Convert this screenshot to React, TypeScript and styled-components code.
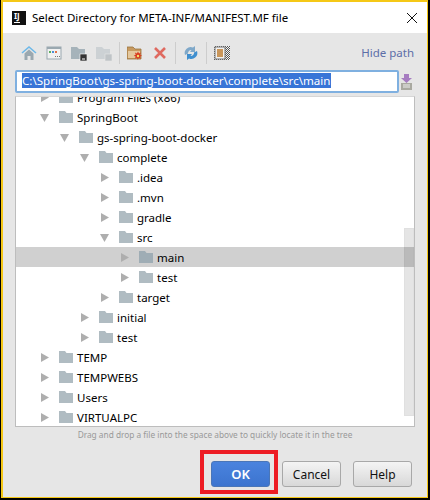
import styled, { createGlobalStyle } from "styled-components";

const GlobalStyle = createGlobalStyle`
  html, body {
    margin: 0;
    padding: 0;
    background: #000;
  }
  * {
    box-sizing: border-box;
  }
`;

const INDENT = 20;

const treeRows = [
  { label: "Program Files (x86)", level: 0, open: false },
  { label: "SpringBoot", level: 0, open: true },
  { label: "gs-spring-boot-docker", level: 1, open: true },
  { label: "complete", level: 2, open: true },
  { label: ".idea", level: 3, open: false },
  { label: ".mvn", level: 3, open: false },
  { label: "gradle", level: 3, open: false },
  { label: "src", level: 3, open: true },
  { label: "main", level: 4, open: false, selected: true },
  { label: "test", level: 4, open: false },
  { label: "target", level: 3, open: false },
  { label: "initial", level: 2, open: false },
  { label: "test", level: 2, open: false },
  { label: "TEMP", level: 0, open: false },
  { label: "TEMPWEBS", level: 0, open: false },
  { label: "Users", level: 0, open: false },
  { label: "VIRTUALPC", level: 0, open: false },
];

const Dialog = styled.div`
  position: relative;
  width: 430px;
  height: 500px;
  display: flex;
  flex-direction: column;
  border-style: solid;
  border-color: #000;
  border-width: 0 2px 2px 1px;
  background: #e6e6e6;
  font-family: "Noto Sans", "Open Sans", sans-serif;
  font-size: 11.5px;
  color: #000;
  overflow: hidden;
`;

const Inner = styled.div`
  flex: 1;
  display: flex;
  flex-direction: column;
  border-style: solid;
  border-color: #f5c816;
  border-width: 2px 1px 1px 2px;
  min-height: 0;
`;

const TitleBar = styled.div`
  height: 31px;
  flex: none;
  background: #fff;
  display: flex;
  align-items: center;
  padding: 0 9px;
`;

const AppIcon = styled.div`
  width: 14px;
  height: 14px;
  background: #111;
  color: #fff;
  font-size: 8px;
  font-weight: 700;
  line-height: 8px;
  padding: 1px 0 0 2px;
  flex: none;
  position: relative;
  &::after {
    content: "";
    position: absolute;
    left: 2px;
    bottom: 2px;
    width: 6px;
    height: 1px;
    background: #fff;
  }
`;

const Title = styled.div`
  margin-left: 6px;
  flex: 1;
  white-space: nowrap;
`;

const CloseIcon = styled.svg`
  width: 12px;
  height: 12px;
`;

const Toolbar = styled.div`
  height: 37px;
  flex: none;
  display: flex;
  align-items: center;
  padding: 2px 13px 0 18px;
  gap: 9px;
`;

const ToolIcon = styled.svg`
  width: 16px;
  height: 16px;
  flex: none;
`;

const Divider = styled.div`
  width: 1px;
  height: 22px;
  background: #cdcdcd;
  margin: 0 -2px;
`;

const HidePath = styled.div`
  margin-left: auto;
  color: #5d6ea8;
`;

const PathRow = styled.div`
  display: flex;
  align-items: center;
  padding: 0 12px;
  height: 23px;
  flex: none;
`;

const PathInput = styled.div`
  width: 384px;
  height: 23px;
  flex: none;
  background: #fff;
  border: 2px solid #7fb0e0;
  border-radius: 2px;
  padding: 1px 0 0 5px;
  font-size: 11.6px;
  line-height: 16px;
  white-space: nowrap;
  overflow: hidden;
`;

const PathText = styled.span`
  background: #3875d7;
  color: #fff;
`;

const Tree = styled.div`
  position: relative;
  flex: none;
  height: 331px;
  margin: 3px 12px 0;
  background: #fff;
  border: 1px solid #bdbdbd;
  border-top-color: #d6d6d6;
  overflow: hidden;
`;

const TreeList = styled.div`
  margin-top: -10px;
`;

const Row = styled.div<{ $level: number; $selected?: boolean }>`
  height: 20px;
  display: flex;
  align-items: center;
  padding-left: ${(p) => 24 + p.$level * INDENT}px;
  background: ${(p) => (p.$selected ? "#d0d0d0" : "transparent")};
`;

const Arrow = styled.svg`
  width: 9px;
  height: 9px;
  flex: none;
`;

const Folder = styled.svg`
  width: 14px;
  height: 12px;
  margin-left: 10px;
  flex: none;
`;

const RowLabel = styled.span`
  margin-left: 4px;
  white-space: nowrap;
`;

const ScrollThumb = styled.div`
  position: absolute;
  right: 0;
  top: 131px;
  width: 10px;
  height: 188px;
  background: rgba(0, 0, 0, 0.1);
  border: 1px solid rgba(0, 0, 0, 0.02);
`;

const Hint = styled.div`
  flex: none;
  height: 16px;
  text-align: center;
  font-size: 8.3px;
  line-height: 16px;
  color: #999;
`;

const Footer = styled.div`
  flex: 1;
  display: flex;
  justify-content: flex-end;
  align-items: flex-start;
  gap: 12px;
  padding: 18px 15px 0 0;
`;

const Button = styled.div<{ $primary?: boolean }>`
  width: 59px;
  height: 26px;
  border-radius: 3px;
  display: flex;
  align-items: center;
  justify-content: center;
  border: 1px solid ${(p) => (p.$primary ? "#4a76b8" : "#a8a8a8")};
  background: ${(p) =>
    p.$primary
      ? "linear-gradient(#4a83de, #3c74cf)"
      : "linear-gradient(#f4f4f4, #d8d8d8)"};
  color: ${(p) => (p.$primary ? "#fff" : "#111")};
  font-size: ${(p) => (p.$primary ? 13 : 12)}px;
  font-weight: ${(p) => (p.$primary ? 600 : 400)};
`;

const RedBox = styled.div`
  position: absolute;
  left: 199px;
  top: 450px;
  width: 78px;
  height: 44px;
  border: 4px solid #ed1c24;
`;

const FolderShape = ({ dark }: { dark?: boolean }) => (
  <Folder viewBox="0 0 14 12">
    <path d="M0 0h6l1.5 2H14v10H0z" fill={dark ? "#9fadb5" : "#b0bcc2"} />
  </Folder>
);

export default function App() {
  return (
    <>
      <GlobalStyle />
      <Dialog>
        <Inner>
          <TitleBar>
            <AppIcon>IJ</AppIcon>
            <Title>Select Directory for META-INF/MANIFEST.MF file</Title>
            <CloseIcon viewBox="0 0 12 12">
              <path d="M1 1l10 10M11 1L1 11" stroke="#111" strokeWidth="1" fill="none" />
            </CloseIcon>
          </TitleBar>
          <Toolbar>
            <ToolIcon viewBox="0 0 16 16">
              <path d="M1 8l7-6 7 6" fill="none" stroke="#6db8e8" strokeWidth="1.6" />
              <path d="M3.5 8.5L8 4.5l4.5 4V15h-3v-4h-3v4h-3z" fill="#9aa8b0" />
            </ToolIcon>
            <ToolIcon viewBox="0 0 16 16">
              <rect x="1" y="2" width="14" height="12" fill="#f2f2f2" stroke="#9aa8b0" />
              <rect x="1" y="2" width="14" height="2" fill="#9aa8b0" />
              <path d="M3 6h2v2H3z" fill="#5bb05b" />
              <path d="M6 6h2v2H6z" fill="#4a90d9" />
              <path d="M9 6h2v2H9z" fill="#e0724a" />
              <path d="M9 11h1v1H9zM11 11h1v1h-1zM13 11h1v1h-1z" fill="#777" />
            </ToolIcon>
            <ToolIcon viewBox="0 0 16 16">
              <path d="M0 2h6l2 2h6v10H0z" fill="#a6b3ba" />
              <rect x="9" y="9" width="7" height="7" fill="#333" stroke="#fff" strokeWidth="0.6" />
              <path d="M11 14h3" stroke="#fff" />
            </ToolIcon>
            <ToolIcon viewBox="0 0 16 16">
              <path d="M0 2h6l2 2h6v10H0z" fill="#ccd1d4" />
              <rect x="9" y="9" width="7" height="7" fill="#bfc4c7" stroke="#e6e6e6" strokeWidth="0.6" />
            </ToolIcon>
            <Divider />
            <ToolIcon viewBox="0 0 16 16">
              <path d="M0 2h6l2 2h6v10H0z" fill="#c79a60" stroke="#9a7440" strokeWidth="0.8" />
              <path d="M1 6h12v7H1z" fill="#e4c89e" />
              <path d="M11 6.5l1 2 2-1-1 2.2 2 1-2 .9.8 2.2-2-1-1 2-.9-2-2 1 .8-2.2-2-.9 2-1-.8-2.2 2 1z" fill="#d8391f" />
              <circle cx="11" cy="11" r="1.2" fill="#f4e06a" />
            </ToolIcon>
            <ToolIcon viewBox="0 0 16 16">
              <path d="M3 3l10 10M13 3L3 13" stroke="#df6a60" strokeWidth="2.6" fill="none" />
            </ToolIcon>
            <Divider />
            <ToolIcon viewBox="0 0 16 16">
              <path d="M2 10a6 6 0 0 1 8-7.5l2-1.5v6H7l1.5-2A3.2 3.2 0 0 0 5 8.5z" fill="#7fa8c9" />
              <path d="M14 6a6 6 0 0 1-8 7.5L4 15V9h5l-1.5 2A3.2 3.2 0 0 0 11 7.5z" fill="#3f8fcf" />
            </ToolIcon>
            <Divider />
            <ToolIcon viewBox="0 0 16 16">
              <defs>
                <pattern id="checker" width="2" height="2" patternUnits="userSpaceOnUse">
                  <rect width="2" height="2" fill="#f4f4f4" />
                  <rect width="1" height="1" fill="#555" />
                  <rect x="1" y="1" width="1" height="1" fill="#555" />
                </pattern>
              </defs>
              <rect x="0" y="1" width="16" height="14" fill="url(#checker)" />
              <rect x="1" y="2" width="10" height="12" fill="#f0f0f0" stroke="#777" />
              <rect x="3" y="4" width="6" height="8" fill="#c9965a" />
            </ToolIcon>
            <HidePath>Hide path</HidePath>
          </Toolbar>
          <PathRow>
            <PathInput>
              <PathText>C:\SpringBoot\gs-spring-boot-docker\complete\src\main</PathText>
            </PathInput>
            <ToolIcon viewBox="0 0 16 16">
              <path d="M5 0h5v4h3L7.5 9 2 4h3z" fill="#a67cc0" />
              <path d="M2 9h11v7H2z" fill="#a9a9a0" />
              <path d="M4 11h7M4 13h7" stroke="#eee" />
            </ToolIcon>
          </PathRow>
          <Tree>
            <TreeList>
              {treeRows.map((row, idx) => (
                <Row key={idx} $level={row.level} $selected={row.selected}>
                  <Arrow viewBox="0 0 9 9">
                    {row.open ? (
                      <path d="M0 1h9L4.5 9z" fill="#aeaeae" />
                    ) : (
                      <path d="M1 0l8 4.5L1 9z" fill="#aeaeae" />
                    )}
                  </Arrow>
                  <FolderShape dark={row.selected} />
                  <RowLabel>{row.label}</RowLabel>
                </Row>
              ))}
            </TreeList>
            <ScrollThumb />
          </Tree>
          <Hint>Drag and drop a file into the space above to quickly locate it in the tree</Hint>
          <Footer>
            <Button $primary>OK</Button>
            <Button>Cancel</Button>
            <Button>Help</Button>
          </Footer>
        </Inner>
        <RedBox />
      </Dialog>
    </>
  );
}
